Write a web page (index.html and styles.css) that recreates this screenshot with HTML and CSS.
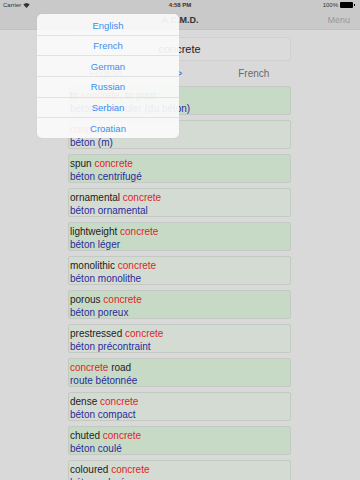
FILE: index.html
```html
<!DOCTYPE html>
<html>
  <head>
    <title>A.C.M.D.</title>
    <meta name="viewport" content="width=device-width, initial-scale=1" />
    <link rel="stylesheet" href="styles.css">
  </head>

  <body>
    <div class="status-bar">
      <div class="carrier">
        <span>Carrier</span>
        <svg class="wifi" width="7" height="5" viewBox="0 0 14 10">
          <path d="M7 10 L0.5 3.2 A9.5 9.5 0 0 1 13.5 3.2 Z" fill="#333" />
        </svg>
      </div>
      <div class="clock">4:58 PM</div>
      <div class="battery">
        <span class="battery-level">100%</span>
        <span class="battery-icon"></span>
        <span class="battery-tip"></span>
      </div>
    </div>

    <div class="nav-bar">
      <div class="nav-title">A.C.M.D.</div>
      <a class="nav-menu" href="#">Menu</a>
    </div>

    <main class="content">
      <div class="search-field">concrete</div>

      <div class="lang-row">
        <span class="lang">English</span>
        <span class="arrow">&gt;</span>
        <span class="lang">French</span>
      </div>

      <div class="results">
        <div class="entry green">
          <div class="src">to <em>concrete</em>, to pour</div>
          <div class="dst">bétonner, couler (du béton)</div>
        </div>
        <div class="entry grey">
          <div class="src"><em>concrete</em></div>
          <div class="dst">béton (m)</div>
        </div>
        <div class="entry green">
          <div class="src">spun <em>concrete</em></div>
          <div class="dst">béton centrifugé</div>
        </div>
        <div class="entry grey">
          <div class="src">ornamental <em>concrete</em></div>
          <div class="dst">béton ornamental</div>
        </div>
        <div class="entry green">
          <div class="src">lightweight <em>concrete</em></div>
          <div class="dst">béton léger</div>
        </div>
        <div class="entry grey">
          <div class="src">monolithic <em>concrete</em></div>
          <div class="dst">béton monolithe</div>
        </div>
        <div class="entry green">
          <div class="src">porous <em>concrete</em></div>
          <div class="dst">béton poreux</div>
        </div>
        <div class="entry grey">
          <div class="src">prestressed <em>concrete</em></div>
          <div class="dst">béton précontraint</div>
        </div>
        <div class="entry green">
          <div class="src"><em>concrete</em> road</div>
          <div class="dst">route bétonnée</div>
        </div>
        <div class="entry grey">
          <div class="src">dense <em>concrete</em></div>
          <div class="dst">béton compact</div>
        </div>
        <div class="entry green">
          <div class="src">chuted <em>concrete</em></div>
          <div class="dst">béton coulé</div>
        </div>
        <div class="entry grey">
          <div class="src">coloured <em>concrete</em></div>
          <div class="dst">béton coloré</div>
        </div>
      </div>
    </main>

    <ul class="popover">
      <li>English</li>
      <li>French</li>
      <li>German</li>
      <li>Russian</li>
      <li>Serbian</li>
      <li>Croatian</li>
    </ul>
  </body>
</html>
```

FILE: styles.css
```css
*,
*:before,
*:after {
  box-sizing: border-box;
}

body {
  font-family: "Liberation Sans", Arial, sans-serif;
  margin: 0;
  padding: 0;
  width: 360px;
  height: 480px;
  overflow: hidden;
  background: #d9d9d9;
  color: #222;
}

.status-bar {
  height: 10px;
  background: #c9c9c9;
  display: grid;
  grid-template-columns: 1fr auto 1fr;
  align-items: center;
  padding: 0 3px;
  font-size: 6px;
  line-height: 10px;
  color: #333;
}

.carrier {
  display: flex;
  align-items: center;
  gap: 2px;
}

.battery {
  display: flex;
  align-items: center;
  justify-content: flex-end;
  padding-right: 2px;
}

.battery-level {
  margin-right: 2px;
}

.battery-icon {
  display: block;
  flex: 0 0 13px;
  height: 6px;
  background: #000;
  border-radius: 1px;
}

.battery-tip {
  display: block;
  flex: 0 0 1px;
  height: 2px;
  margin-left: 1px;
  background: #000;
}

.clock {
  font-weight: bold;
}

.nav-bar {
  height: 20px;
  background: #c9c9c9;
  border-bottom: 1px solid #c2c2c2;
  display: flex;
  align-items: center;
  justify-content: center;
  position: relative;
}

.nav-title {
  font-size: 9px;
  font-weight: bold;
  color: #333;
}

.nav-menu {
  position: absolute;
  right: 10px;
  top: 5px;
  font-size: 9px;
  color: #999;
  text-decoration: none;
}

.content {
  padding: 7px 69px 0 68px;
}

.search-field {
  height: 24px;
  border: 1px solid #d0d0d0;
  border-radius: 3px;
  background: #dbdbdb;
  display: flex;
  align-items: center;
  justify-content: center;
  font-size: 11px;
  color: #222;
}

.lang-row {
  display: grid;
  grid-template-columns: 1fr 1fr 1fr;
  text-align: center;
  font-size: 10px;
  color: #6a6a6a;
  height: 25px;
  align-items: center;
  padding-bottom: 1px;
}

.arrow {
  color: #3b7bd6;
}

.results {
  display: flex;
  flex-direction: column;
  gap: 5px;
}

.entry {
  height: 29px;
  border: 1px solid #c3cac3;
  border-radius: 2px;
  padding: 2px 2px 0 1px;
  font-size: 10px;
  line-height: 13px;
  white-space: nowrap;
  flex-shrink: 0;
}

.entry.green {
  background: #c7dac6;
}

.entry.grey {
  background: #d3dbd3;
}

.src {
  color: #222;
}

.src em {
  font-style: normal;
  color: #e02424;
}

.dst {
  color: #2b2b9c;
}

.popover {
  position: absolute;
  left: 37px;
  top: 14px;
  width: 142px;
  margin: 0;
  padding: 0;
  list-style: none;
  background: rgba(250, 250, 250, 0.93);
  border-radius: 5px;
  box-shadow: 0 0 2px rgba(0, 0, 0, 0.05);
}

.popover li {
  height: 20.7px;
  display: flex;
  align-items: center;
  justify-content: center;
  font-size: 9.5px;
  color: #3a8ef2;
  border-top: 1px solid #e2e2e2;
}

.popover li:first-child {
  border-top: 0;
  padding-top: 2px;
}
```
